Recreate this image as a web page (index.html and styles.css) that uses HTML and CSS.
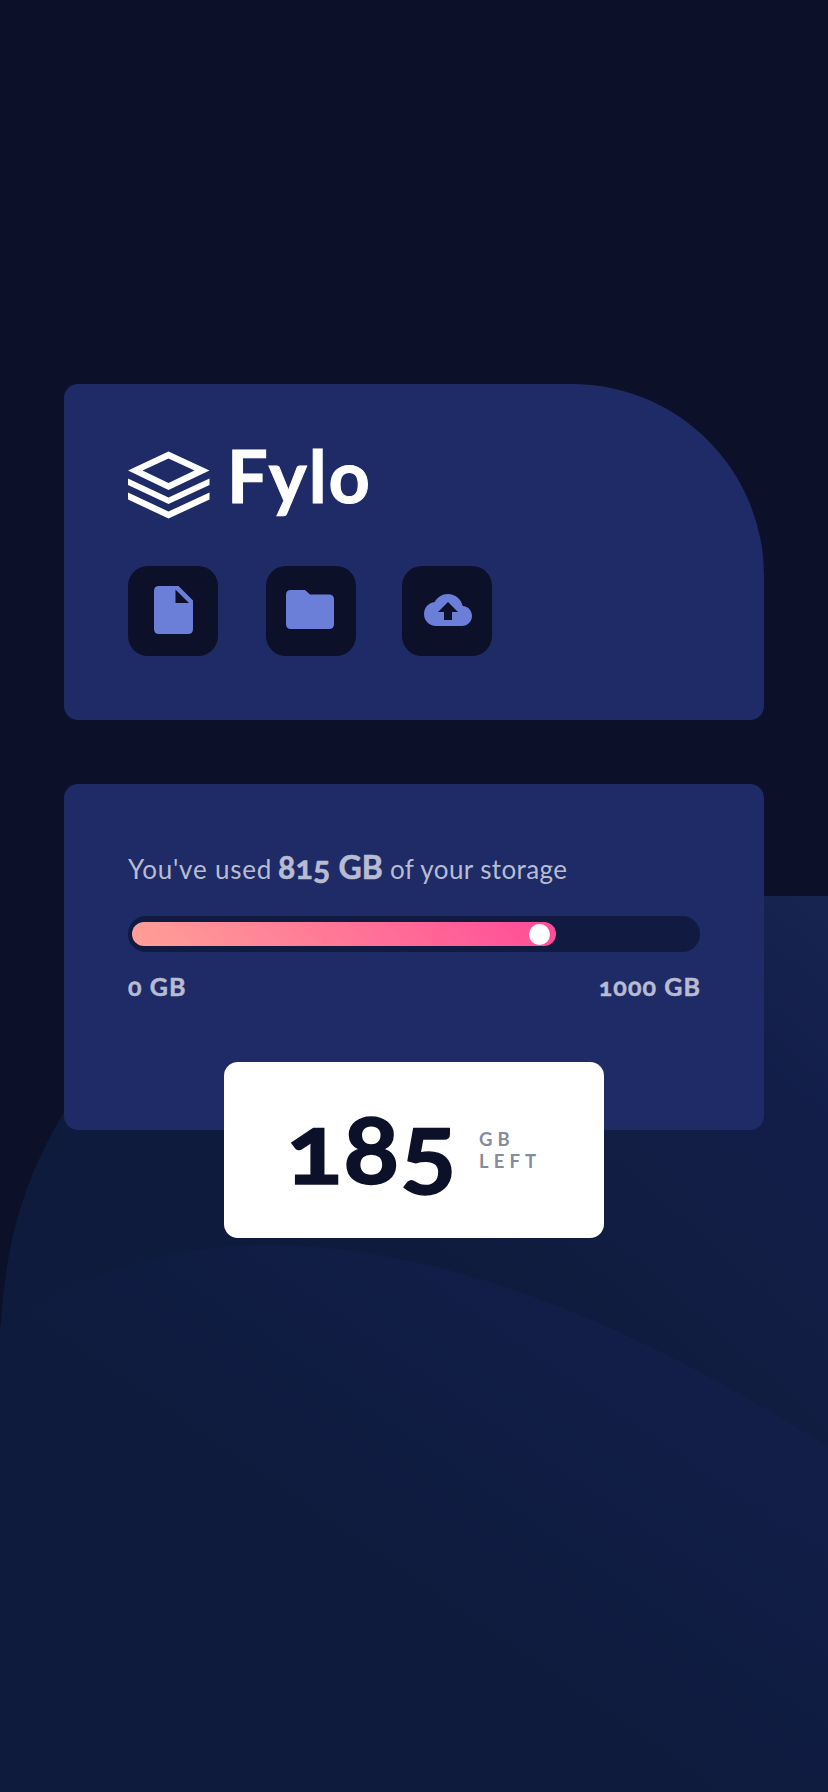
FILE: index.html
```html
<!DOCTYPE html>
<html lang="en">
<head>
<meta charset="utf-8">
<meta name="viewport" content="width=device-width, initial-scale=1">
<title>Fylo data storage</title>
<link rel="stylesheet" href="styles.css">
</head>
<body>
<svg class="backdrop" viewBox="0 0 828 896" aria-hidden="true">
  <defs>
    <linearGradient id="back" gradientUnits="userSpaceOnUse" x1="828" y1="0" x2="480" y2="400">
      <stop offset="0" stop-color="#172450"/><stop offset=".35" stop-color="#121e48"/><stop offset=".7" stop-color="#111d42"/><stop offset="1" stop-color="#0e1b3c"/>
    </linearGradient>
    <linearGradient id="front" gradientUnits="userSpaceOnUse" x1="740" y1="400" x2="490" y2="760">
      <stop offset="0" stop-color="#131e4b"/><stop offset=".45" stop-color="#111d45"/><stop offset="1" stop-color="#0e1b3d"/>
    </linearGradient>
  </defs>
  <path fill="url(#back)" d="M0 454C2 360 20 290 63 218C140 80 300 0 480 0H828V896H0Z"/>
  <path fill="url(#front)" d="M0 430C70 385 165 349 264 349C410 349 590 400 828 551V896H0Z"/>
</svg>
<main class="page">
  <section class="card card-brand">
    <div class="logo">
      <svg class="mark" viewBox="0 0 82 74" aria-hidden="true">
        <g fill="#fff">
          <path fill-rule="evenodd" d="M40.500 3.500 81.500 22.500 40.500 42 0 22.500ZM40.500 10.500 14.500 22.500 40.500 35 66.500 22.500Z"/>
          <path d="M0 30.500 40.500 49.500 81.500 30.500V37L40.500 56 0 37ZM0 44.500 40.500 63.500 81.500 44.500V51.500L40.500 70.500 0 51.500Z"/>
        </g>
      </svg>
      <span class="wordmark">Fylo</span>
    </div>
    <div class="actions">
      <div class="tile"><svg viewBox="0 0 90 90"><path fill="#6c7fd8" fill-rule="evenodd" d="M31 20H50.500L65 34.500V63Q65 68 60 68H31Q26 68 26 63V25Q26 20 31 20ZM47.500 23.500V37H61Z"/></svg></div>
      <div class="tile tile-folder"><svg viewBox="0 0 90 90"><path fill="#6c7fd8" d="M25 24H39L44 28.500H63Q68 28.500 68 33.500V58Q68 63 63 63H25Q20 63 20 58V29Q20 24 25 24Z"/></svg></div>
      <div class="tile"><svg viewBox="0 0 90 90"><path fill="#6c7fd8" fill-rule="evenodd" d="M60.700 40.100C59.300 33.200 53.300 28 46 28C40.200 28 35.200 31.300 32.700 36.100C26.700 36.700 22 41.800 22 48C22 54.600 27.400 60 34 60H60C65.500 60 70 55.500 70 50C70 44.700 65.900 40.400 60.700 40.100ZM50 46V54H42V46H36L46 36L56 46Z"/></svg></div>
    </div>
  </section>
  <section class="card card-usage">
    <p class="summary"><span class="s-a">You've used</span><strong>815 GB</strong><span class="s-b">of your storage</span></p>
    <div class="track"><div class="fill"><span class="knob"></span></div></div>
    <div class="limits"><span>0 GB</span><span class="max">1000 GB</span></div>
    <div class="remaining">
      <div class="amount">185</div>
      <div class="unit">GB<br>LEFT</div>
    </div>
  </section>
</main>
</body>
</html>
```
FILE: styles.css
```css
* { box-sizing: border-box; }
body {
  margin: 0;
  background: #0c1129;
  font-family: Lato, "Open Sans", sans-serif;
  color: #b8bcd2;
}
.backdrop { position: absolute; left: 0; top: 896px; width: 828px; height: 896px; }
.page {
  position: relative;
  min-height: 1792px;
  padding: 384px 64px 0;
  display: flex;
  flex-direction: column;
  gap: 64px;
}
.card { background: #1e2b66; border-radius: 14px; padding: 64px; }
.card-brand { height: 336px; border-top-right-radius: 192px; }
.logo { display: flex; align-items: flex-start; gap: 17px; height: 90px; }
.mark { width: 82px; height: 74px; }
.wordmark {
  margin-top: -18px;
  color: #fff;
  font-size: 72px;
  font-weight: 700;
  line-height: 90px;
  letter-spacing: 1.9px;
  -webkit-text-stroke: 1px;
}
.actions { display: flex; margin-top: 28px; gap: 46px; }
.tile { width: 90px; height: 90px; border-radius: 20px; background: #0c1129; }
.tile-folder { margin-left: 2px; }
.tile svg { display: block; width: 90px; height: 90px; }
.card-usage { height: 346px; position: relative; }
.summary {
  margin: -1.5px 0 0;
  height: 69.5px;
  display: flex;
  align-items: baseline;
  font-size: 26px;
  line-height: 40px;
  white-space: nowrap;
}
.s-a { width: 150px; letter-spacing: 0.8px; }
.s-b { letter-spacing: 0.4px; }
.summary strong {
  width: 112px;
  font-size: 32px;
  letter-spacing: 0.2px;
  -webkit-text-stroke: 0.6px;
  font-variant-numeric: oldstyle-nums;
}
.track { height: 36px; padding: 6px 4px; border-radius: 18px; background: #111a40; }
.fill {
  width: 424px;
  height: 24px;
  padding: 1.5px 6px;
  border-radius: 12px;
  background: linear-gradient(45deg, #ffa197, #ff4b98);
  display: flex;
  justify-content: flex-end;
}
.knob { width: 21px; height: 21px; border-radius: 50%; background: #fff; }
.limits {
  display: flex;
  justify-content: space-between;
  margin-top: 19px;
  font-size: 25px;
  font-weight: 700;
  line-height: 30px;
  letter-spacing: 1.1px;
  -webkit-text-stroke: 0.5px;
  font-variant-numeric: oldstyle-nums;
}
.max { margin-right: -1.1px; }
.remaining {
  position: absolute;
  left: 160px;
  top: 278px;
  width: 380px;
  height: 176px;
  padding-left: 62px;
  border-radius: 14px;
  background: #fff;
  display: flex;
  align-items: center;
}
.amount {
  width: 193px;
  color: #0c1129;
  font-size: 97px;
  font-weight: 700;
  line-height: 100px;
  letter-spacing: 0.5px;
  white-space: nowrap;
  font-variant-numeric: oldstyle-nums;
  -webkit-text-stroke: 1.5px;
  transform: translateY(-3px) scaleX(1.08);
  transform-origin: left;
}
.unit { color: #868b9d; font-size: 18.5px; font-weight: 700; line-height: 22px; letter-spacing: 5.1px; }
```
